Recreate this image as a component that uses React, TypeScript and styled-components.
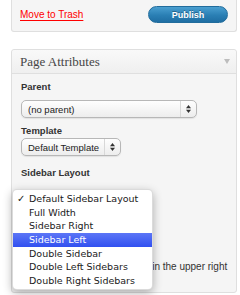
import styled, { createGlobalStyle } from "styled-components";

/* ---------------------------------------------
   Global
--------------------------------------------- */
const GlobalStyle = createGlobalStyle`
  html, body {
    margin: 0;
    padding: 0;
    background: #ffffff;
  }
  body {
    font-family: "Liberation Sans", Arial, sans-serif;
    color: #333333;
  }
`;

/* ---------------------------------------------
   Styled Components
--------------------------------------------- */
const Page = styled.div`
  position: relative;
  width: 240px;
  height: 295px;
  overflow: hidden;
  box-sizing: border-box;
  padding: 0 3px 0 11px;
`;

const PublishBox = styled.div`
  height: 32px;
  box-sizing: border-box;
  display: flex;
  align-items: center;
  justify-content: space-between;
  padding: 0 8px 2px 8px;
  background: #f5f5f5;
  border: 1px solid #dfdfdf;
  border-top: none;
  border-radius: 0 0 3px 3px;
`;

const TrashLink = styled.a`
  font-size: 10px;
  color: #ff0000;
  text-decoration: underline;
  text-underline-offset: 2px;
  cursor: pointer;
`;

const PublishButton = styled.button`
  width: 80px;
  height: 17px;
  padding: 0;
  border: 1px solid #216c9c;
  border-radius: 9px;
  background: linear-gradient(#4a9fd0, #2a7fb4 55%, #1f6ea3);
  color: #ffffff;
  font-family: "Liberation Sans", Arial, sans-serif;
  font-size: 9px;
  font-weight: bold;
  text-shadow: 0 -1px 0 rgba(0, 0, 0, 0.3);
  cursor: pointer;
`;

const Postbox = styled.div`
  margin-top: 17px;
  border: 1px solid #dfdfdf;
  border-radius: 3px;
  background: #f5f5f5;
`;

const PostboxHeader = styled.div`
  height: 23px;
  display: flex;
  align-items: center;
  justify-content: space-between;
  padding: 0 6px 0 8px;
  border-bottom: 1px solid #dfdfdf;
  background: linear-gradient(#f9f9f9, #efefef);
  border-radius: 3px 3px 0 0;
`;

const PostboxTitle = styled.h3`
  margin: 0;
  font-family: "Liberation Serif", Georgia, serif;
  font-size: 13px;
  font-weight: normal;
  color: #464646;
`;

const Toggle = styled.span`
  width: 0;
  height: 0;
  border-left: 3.5px solid transparent;
  border-right: 3.5px solid transparent;
  border-top: 5px solid #bdbdbd;
`;

const PostboxBody = styled.div`
  padding: 0 4px 4px 9px;
`;

const Label = styled.div<{ $mt: number }>`
  margin-top: ${(p) => p.$mt}px;
  font-size: 9.5px;
  font-weight: bold;
  line-height: 12px;
  color: #333333;
`;

const SelectBox = styled.div<{ $w: number; $mt: number }>`
  width: ${(p) => p.$w}px;
  height: 18px;
  margin-top: ${(p) => p.$mt}px;
  box-sizing: border-box;
  display: flex;
  align-items: stretch;
  border: 1px solid #b7b7b7;
  border-radius: 5px;
  background: linear-gradient(#fefefe, #ededed);
  box-shadow: 0 1px 1px rgba(0, 0, 0, 0.08);
  font-size: 9.5px;
  color: #222222;
`;

const SelectValue = styled.span`
  flex: 1;
  display: flex;
  align-items: center;
  padding-left: 6px;
  white-space: nowrap;
  overflow: hidden;
`;

const SelectArrows = styled.span`
  width: 15px;
  display: flex;
  align-items: center;
  justify-content: center;
  border-left: 1px solid #d8d8d8;
`;

const OrderInput = styled.div`
  width: 40px;
  height: 18px;
  margin-top: 4px;
  box-sizing: border-box;
  border: 1px solid #dfdfdf;
  border-radius: 3px;
  background: #ffffff;
  font-size: 9.5px;
  line-height: 16px;
  padding-left: 4px;
`;

const HelpText = styled.p`
  margin: 13px 0 0;
  font-size: 10px;
  line-height: 14px;
  color: #333333;
`;

const Menu = styled.ul`
  position: absolute;
  left: 12px;
  top: 189px;
  width: 141px;
  height: 101px;
  box-sizing: border-box;
  margin: 0;
  padding: 2px 0 0;
  list-style: none;
  background: #ffffff;
  border: 1px solid rgba(0, 0, 0, 0.14);
  border-radius: 5px;
  box-shadow: 0 3px 10px rgba(0, 0, 0, 0.3);
  font-family: "DejaVu Sans", "Liberation Sans", sans-serif;
  font-size: 9.5px;
  color: #1a1a1a;
  overflow: hidden;
`;

const MenuItem = styled.li<{ $active?: boolean }>`
  position: relative;
  height: 13.7px;
  line-height: 13.7px;
  padding-left: 16px;
  white-space: nowrap;
  background: ${(p) =>
    p.$active ? "linear-gradient(#5c76f6, #3150f0)" : "transparent"};
  color: ${(p) => (p.$active ? "#ffffff" : "inherit")};
`;

const Check = styled.span`
  position: absolute;
  left: 4px;
  top: 0;
  font-size: 10px;
`;

/* ---------------------------------------------
   Pieces
--------------------------------------------- */
function Arrows() {
  return (
    <svg width="5" height="8" viewBox="0 0 5 8">
      <polygon points="0,3.2 2.5,0 5,3.2" fill="#333" />
      <polygon points="0,4.8 2.5,8 5,4.8" fill="#333" />
    </svg>
  );
}

function Select({ value, width, mt }: { value: string; width: number; mt: number }) {
  return (
    <SelectBox $w={width} $mt={mt}>
      <SelectValue>{value}</SelectValue>
      <SelectArrows>
        <Arrows />
      </SelectArrows>
    </SelectBox>
  );
}

const layouts = [
  "Default Sidebar Layout",
  "Full Width",
  "Sidebar Right",
  "Sidebar Left",
  "Double Sidebar",
  "Double Left Sidebars",
  "Double Right Sidebars",
];

/* ---------------------------------------------
   Component
--------------------------------------------- */
export default function App() {
  return (
    <Page>
      <GlobalStyle />
      <PublishBox>
        <TrashLink>Move to Trash</TrashLink>
        <PublishButton>Publish</PublishButton>
      </PublishBox>

      <Postbox>
        <PostboxHeader>
          <PostboxTitle>Page Attributes</PostboxTitle>
          <Toggle />
        </PostboxHeader>
        <PostboxBody>
          <Label $mt={7}>Parent</Label>
          <Select value="(no parent)" width={176} mt={7} />
          <Label $mt={7}>Template</Label>
          <Select value="Default Template" width={100} mt={1} />
          <Label $mt={11}>Sidebar Layout</Label>
          <Select value="Default Sidebar Layout" width={124} mt={11} />
          <Label $mt={5}>Order</Label>
          <OrderInput>0</OrderInput>
          <HelpText>
            Need help? Use the Help tab in the upper right of your screen.
          </HelpText>
        </PostboxBody>
      </Postbox>

      <Menu>
        {layouts.map((name, i) => (
          <MenuItem key={name} $active={i === 3}>
            {i === 0 && <Check>✓</Check>}
            {name}
          </MenuItem>
        ))}
      </Menu>
    </Page>
  );
}
